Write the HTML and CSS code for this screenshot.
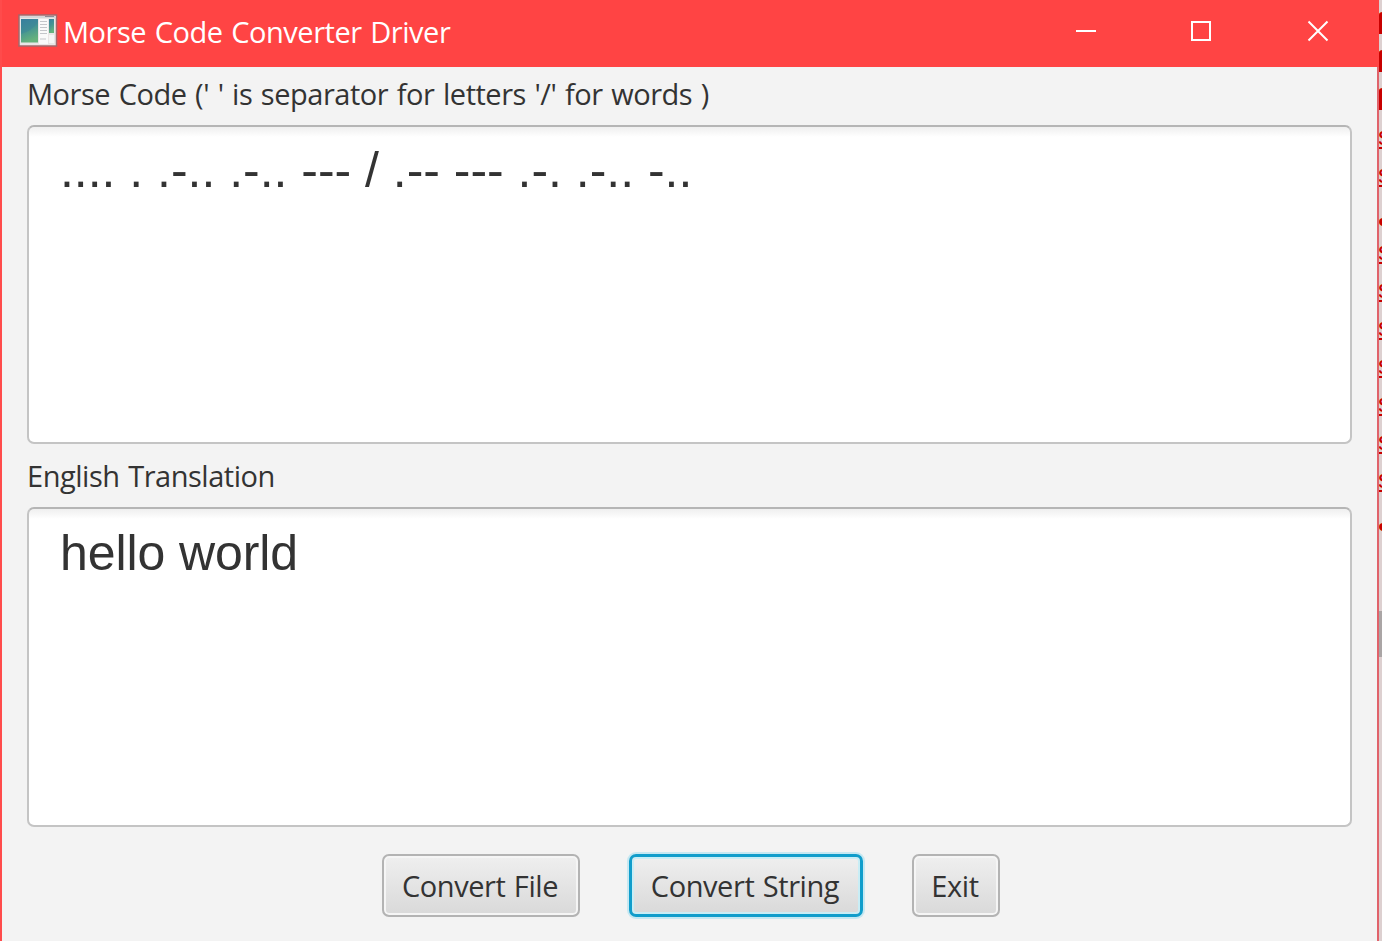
FILE: index.html
```html
<!DOCTYPE html>
<html lang="en">
<head>
<meta charset="utf-8">
<title>Morse Code Converter Driver</title>
<link rel="stylesheet" href="styles.css">
</head>
<body>
<div class="desktop">
  <main class="window">
    <header class="titlebar">
      <svg class="app-icon" width="40" height="33" viewBox="0 0 40 33">
        <defs>
          <linearGradient id="pane" x1="0" y1="0" x2="0.3" y2="1">
            <stop offset="0" stop-color="#397f9f"/>
            <stop offset="0.5" stop-color="#459393"/>
            <stop offset="1" stop-color="#66b27c"/>
          </linearGradient>
        </defs>
        <rect x="1" y="1" width="37.500" height="31" fill="#e9e6e6" stroke="#a3686b" stroke-width="1.500"/>
        <path d="M2 3H38" stroke="#d5d6d7" stroke-width="2"/>
        <path d="M27 2.500h9" stroke="#8f8a93" stroke-width="1"/>
        <rect x="3" y="5" width="17" height="23.500" fill="url(#pane)"/>
        <path d="M3 20Q14 17 20 8V5H3Z" fill="#377d9e" opacity="0.350"/>
        <rect x="21" y="5" width="9" height="25" fill="#fafafa"/>
        <path d="M22 7.500h7M22 10.500h7M22 13.500h7M22 16.500h7M22 19.500h7M22 25h6" stroke="#c4c6ca" stroke-width="1"/>
        <rect x="31" y="5" width="5" height="14" fill="url(#pane)"/>
        <path d="M31 21h5v8h-5Z" fill="#f5f5f5"/>
      </svg>
      <h1 class="title">Morse Code Converter Driver</h1>
      <div class="controls">
        <svg width="20" height="20" viewBox="0 0 20 20"><path d="M0 10H20" /></svg>
        <svg width="20" height="20" viewBox="0 0 20 20"><path d="M1 1H19V19H1Z"/></svg>
        <svg width="20" height="20" viewBox="0 0 20 20"><path d="M.5 .5L19.500 19.500M19.500 .5L.5 19.500"/></svg>
      </div>
    </header>
    <section class="content">
      <label class="label label-morse">Morse Code (' ' is separator for letters '/' for words )</label>
      <div class="area">.... . .-.. .-.. --- / .-- --- .-. .-.. -..</div>
      <label class="label label-english">English Translation</label>
      <div class="area area-english">hello world</div>
      <div class="buttons">
        <button class="btn btn-file">Convert File</button>
        <button class="btn btn-string focused">Convert String</button>
        <button class="btn btn-exit">Exit</button>
      </div>
    </section>
  </main>
  <aside class="behind">
    <div class="line keyword">f</div><div class="line keyword">f</div><div class="line keyword">f</div>
    <div class="line link">s</div><div class="line link">s</div><div class="line dot">•</div>
    <div class="line link">s</div><div class="line link">s</div><div class="line link">s</div><div class="line link">s</div><div class="line link">s</div><div class="line link">s</div><div class="line link">s</div><div class="line dot">•</div>
    <div class="thumb"></div>
  </aside>
</div>
</body>
</html>
```
FILE: styles.css
```css
* { box-sizing: border-box; }
body { margin: 0; overflow: hidden; background: #f3f3f3; font-family: "Open Sans", "Noto Sans", sans-serif; color: #333; }
.desktop { display: flex; width: 1382px; height: 941px; overflow: hidden; }
.window { display: flex; flex-direction: column; width: 1379px; height: 941px; border-left: 2px solid #ff4b4b; border-right: 2px solid #e0626a; background: #f3f3f3; }
.titlebar { display: flex; align-items: center; flex: none; width: 1377px; height: 67px; padding: 0 51px 5px 16px; background: #ff4444; }
.app-icon { flex: none; margin-top: -1px; }
.title { margin: 2px 0 0 5px; font-size: 29px; font-weight: 400; line-height: 40px; color: #fff; white-space: nowrap; letter-spacing: -0.46px; word-spacing: 1.5px; }
.controls { display: flex; gap: 96px; margin-left: auto; }
.controls svg { overflow: visible; fill: none; stroke: #fff; stroke-width: 2; }
.controls svg:nth-child(2) { margin: 0 1px 0 -1px; }
.content { display: flex; flex-direction: column; padding: 0 25px; }
.label { height: 58px; padding-top: 7px; font-size: 29px; line-height: 40px; letter-spacing: -0.47px; word-spacing: 1.5px; white-space: nowrap; }
.label-english { height: 63px; padding-top: 12px; }
.area { height: 319px; padding: 15px 31px; border: 2px solid #c4c4c4; border-top-color: #b5b5b5; border-radius: 7px; background: linear-gradient(#efefef, #fff 10px); font: 50px/56px "Liberation Sans", Arial, sans-serif; letter-spacing: -0.02px; white-space: pre; }
.area-english { height: 320px; padding-top: 16px; letter-spacing: -0.1px; }
.buttons { display: flex; gap: 49px; padding: 27px 0 0 355px; }
.btn { height: 63px; padding: 1px 2px 0 0; border: 2px solid #b3b3b3; border-radius: 7px; background: linear-gradient(#efefef, #d9d9d9); box-shadow: inset 0 0 0 2px #f5f5f5; color: #333; font: 29px/40px "Open Sans", "Noto Sans", sans-serif; letter-spacing: -0.42px; word-spacing: 1.3px; white-space: nowrap; }
.btn-file { width: 198px; }
.btn-string { width: 234px; }
.btn-exit { width: 88px; }
.focused { border: 3px solid #109dcb; box-shadow: 0 0 0 2px #c5e8f2, inset 0 0 0 2px #c9edf5; }
.behind { width: 3px; height: 941px; padding-top: 5px; overflow: hidden; background: #ddd0d0; color: #c80000; }
.line { height: 38.1px; font: 29px/38px "Liberation Sans", sans-serif; }
.keyword { font-weight: 700; text-indent: -3px; }
.link { font-size: 26px; line-height: 34px; text-decoration: underline; text-decoration-skip-ink: none; text-underline-offset: 2px; text-indent: -1px; }
.dot { padding-top: 8px; text-indent: -1px; }
.thumb { height: 46px; margin-top: 73px; background: #aaa5a5; }
```
